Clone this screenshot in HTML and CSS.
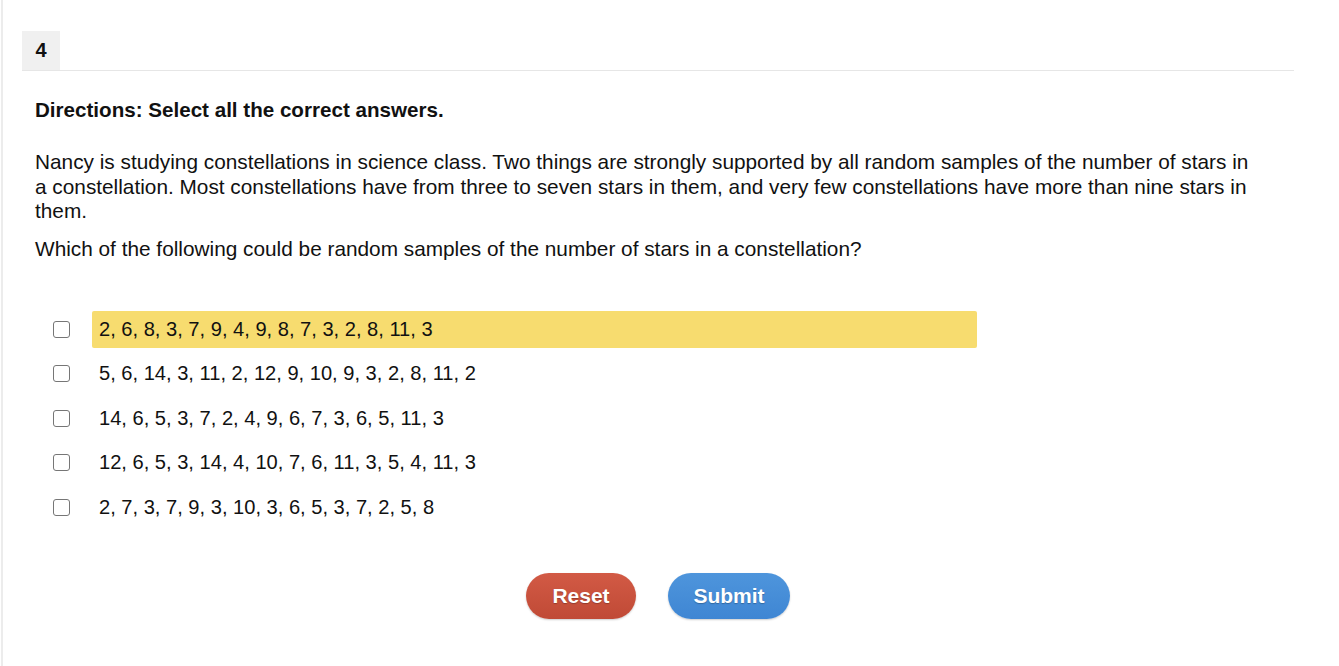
FILE: index.html
```html
<!DOCTYPE html>
<html>
<head>
<meta charset="utf-8">
<link rel="stylesheet" href="styles.css">
</head>
<body>
<div class="page">
  <div class="header">
    <div class="num">4</div>
  </div>
  <div class="content">
    <p class="directions">Directions: Select all the correct answers.</p>
    <p class="para">Nancy is studying constellations in science class. Two things are strongly supported by all random samples of the number of stars in a constellation. Most constellations have from three to seven stars in them, and very few constellations have more than nine stars in them.</p>
    <p class="question">Which of the following could be random samples of the number of stars in a constellation?</p>
    <div class="options">
      <label class="option">
        <span class="box"></span>
        <span class="label highlight">2, 6, 8, 3, 7, 9, 4, 9, 8, 7, 3, 2, 8, 11, 3</span>
      </label>
      <label class="option">
        <span class="box"></span>
        <span class="label">5, 6, 14, 3, 11, 2, 12, 9, 10, 9, 3, 2, 8, 11, 2</span>
      </label>
      <label class="option">
        <span class="box"></span>
        <span class="label">14, 6, 5, 3, 7, 2, 4, 9, 6, 7, 3, 6, 5, 11, 3</span>
      </label>
      <label class="option">
        <span class="box"></span>
        <span class="label">12, 6, 5, 3, 14, 4, 10, 7, 6, 11, 3, 5, 4, 11, 3</span>
      </label>
      <label class="option">
        <span class="box"></span>
        <span class="label">2, 7, 3, 7, 9, 3, 10, 3, 6, 5, 3, 7, 2, 5, 8</span>
      </label>
    </div>
  </div>
  <div class="buttons">
    <button class="btn reset">Reset</button>
    <button class="btn submit">Submit</button>
  </div>
</div>
</body>
</html>
```
FILE: styles.css
```css
html, body {
  margin: 0;
  padding: 0;
  background: #fff;
}
body {
  font-family: "Liberation Sans", Arial, sans-serif;
  color: #111;
  font-size: 20.8px;
}
.page {
  margin-left: 1px;
  border-left: 2px solid #ececec;
  padding: 31px 45px 0 19px;
  min-height: 666px;
  box-sizing: border-box;
  width: 1338px;
}
.header {
  display: flex;
  height: 39px;
  border-bottom: 1px solid #e6e6e6;
}
.num {
  width: 38px;
  background: #f0f0f0;
  font-weight: bold;
  display: flex;
  align-items: center;
  justify-content: center;
  font-size: 20px;
}
.content {
  padding-left: 13px;
  padding-right: 30px;
}
.directions {
  font-weight: bold;
  font-size: 20.6px;
  margin: 27px 0 0;
  line-height: 24px;
}
.para {
  margin: 28px 0 0;
  line-height: 24.5px;
}
.question {
  margin: 13px 0 0;
  line-height: 24px;
}
.options {
  margin-top: 50px;
  display: flex;
  flex-direction: column;
  gap: 7.5px;
  font-size: 20.1px;
}
.option {
  display: flex;
  align-items: center;
  height: 37px;
}
.box {
  width: 15px;
  height: 15px;
  border: 1px solid #767676;
  border-radius: 3px;
  margin-left: 18px;
  margin-right: 22px;
  background: #fff;
  flex: none;
}
.label {
  width: 885px;
  height: 37px;
  display: flex;
  align-items: center;
  padding-left: 7px;
  box-sizing: border-box;
}
.highlight {
  background: #f7dc6f;
  border-radius: 2px;
}
.buttons {
  display: flex;
  justify-content: center;
  gap: 32px;
  margin-top: 47px;
  width: 1272px;
}
.btn {
  font-family: "Liberation Sans", Arial, sans-serif;
  font-weight: bold;
  font-size: 21px;
  color: #fff;
  border: none;
  border-radius: 23px;
  height: 46px;
  text-shadow: 0 1px 1px rgba(0,0,0,0.25);
  box-shadow: 0 1px 2px rgba(0,0,0,0.2);
}
.reset {
  width: 110px;
  background: linear-gradient(#d25a45, #c04a36);
}
.submit {
  width: 122px;
  background: linear-gradient(#4e95dc, #3f86d3);
}
```
